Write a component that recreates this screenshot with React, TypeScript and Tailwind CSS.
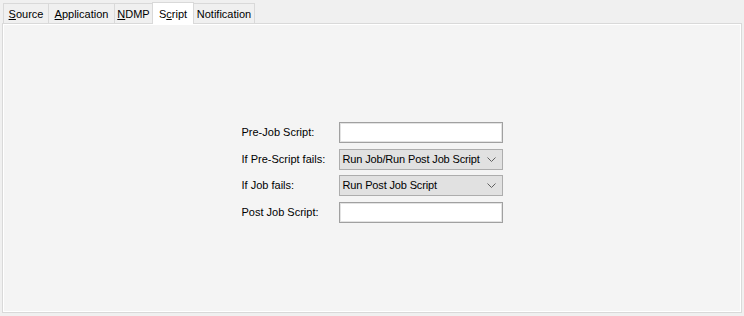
import React from 'react';

const tabs = [
  { label: 'Source', key: 'S', rest: 'ource', w: 'w-[46px]' },
  { label: 'Application', key: 'A', rest: 'pplication', w: 'w-[67px]' },
  { label: 'NDMP', key: 'N', rest: 'DMP', w: 'w-[39px]' },
];

const Chevron = () => (
  <svg width="9" height="5" viewBox="0 0 9 5" className="shrink-0">
    <path d="M0.5 0.5 L4.5 4.5 L8.5 0.5" fill="none" stroke="#606060" strokeWidth="1" />
  </svg>
);

const Select = ({ value }: { value: string }) => (
  <div className="w-[164px] h-[21px] border border-[#adadad] bg-[#e1e1e1] flex items-center justify-between pl-[3px] pr-[6px]">
    <span className="tracking-[-0.15px]">{value}</span>
    <Chevron />
  </div>
);

const Input = () => (
  <div className="w-[164px] h-[21px] border border-[#a0a0a0] bg-white shadow-[inset_0_0_0_1px_#e3e3e3]" />
);

const App: React.FC = () => {
  return (
    <div
      className="w-[744px] h-[316px] bg-[#f0f0f0] text-[11px] text-black flex flex-col px-[2px] pt-[2px] pb-[3px]"
      style={{ fontFamily: 'Tahoma, "Liberation Sans", Arial, sans-serif' }}
    >
      {/* tabs */}
      <div className="flex items-end h-[21px] pl-[1px] relative z-10">
        {tabs.map((t) => (
          <div
            key={t.label}
            className={`${t.w} h-[20px] border border-[#d9d9d9] border-b-0 -ml-px first:ml-0 flex items-center justify-center bg-[#f0f0f0] pt-[2px]`}
          >
            <span>
              <span className="underline">{t.key}</span>
              {t.rest}
            </span>
          </div>
        ))}
        <div className="w-[42px] h-[22px] -ml-px border border-[#d9d9d9] border-b-0 bg-white flex items-start justify-center pt-[3px] -mb-px">
          <span>
            S<span className="underline">c</span>ript
          </span>
        </div>
        <div className="w-[62px] h-[20px] -ml-px border border-[#d9d9d9] border-b-0 flex items-center justify-center bg-[#f0f0f0] pt-[2px]">
          Notification
        </div>
      </div>

      {/* panel */}
      <div className="flex-1 border border-[#d9d9d9] bg-[#f4f4f4] shadow-[inset_0_0_0_1px_#ffffff] flex justify-center items-start pt-[98px]">
        <div className="grid grid-cols-[97px_164px] gap-y-[5.5px] items-center">
          <span>Pre-Job Script:</span>
          <Input />
          <span>If Pre-Script fails:</span>
          <Select value="Run Job/Run Post Job Script" />
          <span>If Job fails:</span>
          <Select value="Run Post Job Script" />
          <span>Post Job Script:</span>
          <Input />
        </div>
      </div>
    </div>
  );
};

export default App;
